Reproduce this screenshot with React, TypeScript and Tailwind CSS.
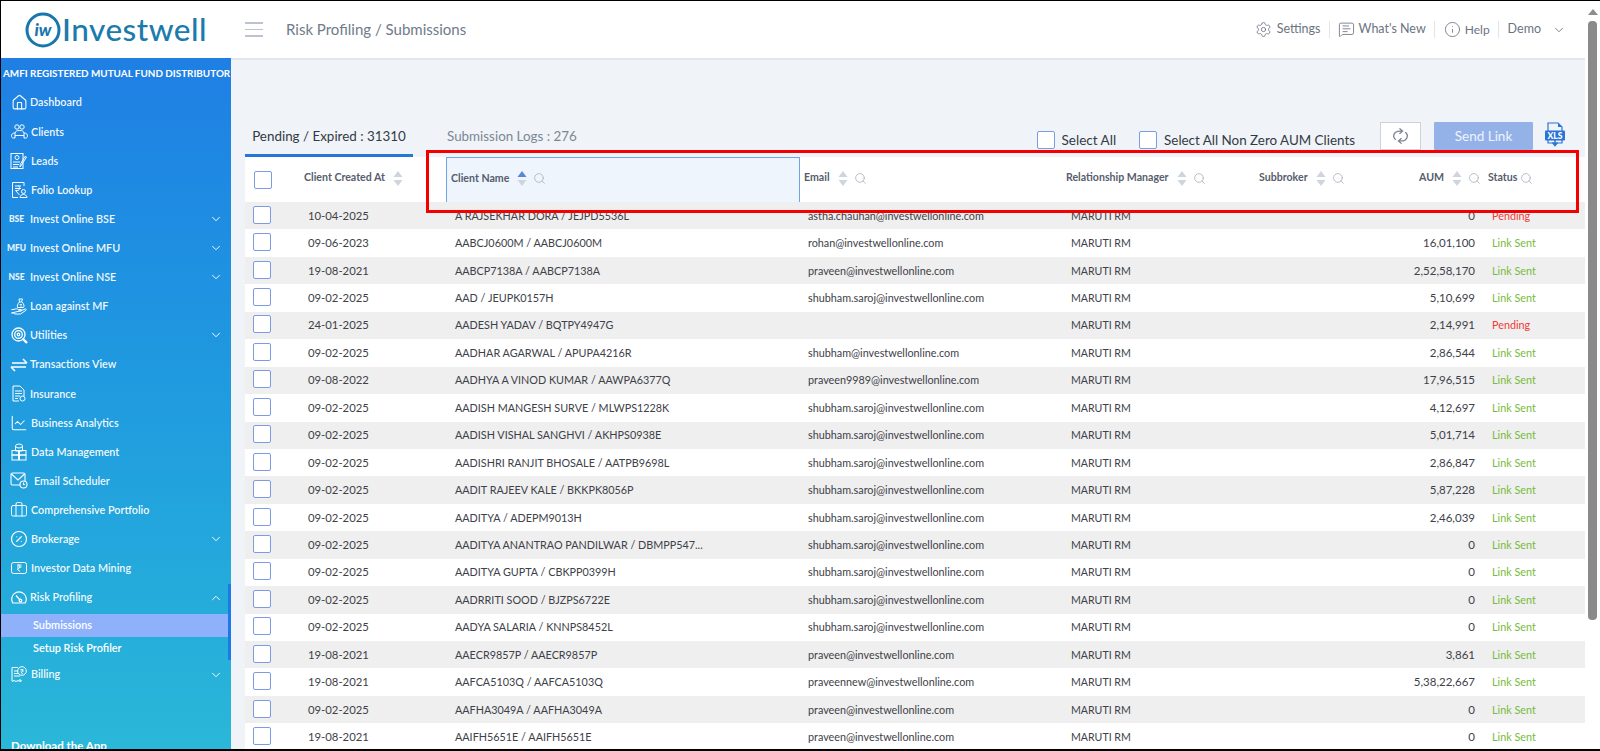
import React from "react";
import {
  Briefcase,
  ChevronDown,
  ChevronUp,
  ChartLine,
  CirclePercent,
  House,
  Info,
  MessageSquareText,
  Search,
  Settings,
} from "lucide-react";

type NavItem = {
  label: string;
  icon: React.ReactNode;
  labelClass: string;
  caret?: boolean;
};

function Badge({ text }: { text: string }) {
  return <span className="-ml-[5px] text-[8.500px] leading-none font-black text-white/90">{text}</span>;
}

function ClientsIcon() {
  return (
    <svg width="17" height="15" viewBox="0 0 17 15" fill="none" stroke="white" strokeWidth="1">
      <circle cx="6" cy="3" r="2.200" />
      <circle cx="11" cy="3" r="2.200" />
      <path d="M4 14V9.500C4 7 6 6.500 8.500 6.500S13 7 13 9.500V14" />
      <path d="M4 14H2.500C1 14 .5 13 .5 11.800c0-1.500 1-2.800 3.500-2.800M13 14h1.500c1.500 0 2-1 2-2.200 0-1.500-1-2.800-3.500-2.800" />
      <path d="M4 11.500h9" />
    </svg>
  );
}

function LeadsIcon() {
  return (
    <svg width="18" height="18" viewBox="0 0 18 18" fill="none" stroke="white" strokeWidth="1">
      <rect x="1" y="1.500" width="12" height="15" />
      <circle cx="7" cy="5.500" r="2" />
      <path d="M3 10h7M3 12.500h6M3 15h5" />
      <path d="M16.500 5l-5 8-1.500 2 .3-2.600 4.700-8z" />
    </svg>
  );
}

function FolioIcon() {
  return (
    <svg width="17" height="18" viewBox="0 0 17 18" fill="none" stroke="white" strokeWidth="1">
      <path d="M13 5V1.500H1.500v15H7" />
      <path d="M4 5h6M4 7.500h6M7 5c2.500 0 2.500 4.500-1 4.500H4.500L8.500 14" />
      <circle cx="12.500" cy="10.500" r="2" />
      <path d="M9 16.500c0-4 7-4 7 0z" />
    </svg>
  );
}

function LoanIcon() {
  return (
    <svg width="16" height="17" viewBox="0 0 16 17" fill="none" stroke="white" strokeWidth="1">
      <path d="M8 1h3.500L10.500 4h-2zM8.500 4C6.500 6 6 8 6.500 9.500h6C13.500 8 13 6 11 4" />
      <path d="M8.500 6.500h2.500M9 8h2" strokeWidth="0.800" />
      <path d="M.5 11.500H3c1.500-1 3-1 4.500 0H10c1 0 1 1.500 0 1.500H7M10.500 12.500l3.500-1.500c1.200-.4 1.700.8.800 1.400L9.500 16H4l-1.500-1H.5z" />
    </svg>
  );
}

function UtilitiesIcon() {
  return (
    <svg width="17" height="17" viewBox="0 0 17 17" fill="none" stroke="white" strokeWidth="1.300">
      <circle cx="7.500" cy="7.500" r="6.500" />
      <circle cx="7.500" cy="7.500" r="3.800" />
      <circle cx="7.500" cy="7.500" r="1.300" />
      <path d="M11.500 11.500l4.500 4.500" strokeWidth="2.400" />
    </svg>
  );
}

function TransactionsIcon() {
  return (
    <svg width="18" height="14" viewBox="0 0 18 14" fill="none" stroke="white" strokeWidth="1.600">
      <path d="M2 5h15M13 1l4 4M16 9H1M5 13L1 9" />
    </svg>
  );
}

function InsuranceIcon() {
  return (
    <svg width="14" height="17" viewBox="0 0 14 17" fill="none" stroke="white" strokeWidth="1">
      <path d="M7 16H1V1h7l4 4v6" />
      <path d="M3 6h7M3 8.500h7M3 11h5M3 13.500h3" />
      <circle cx="10.500" cy="13.500" r="2.500" />
    </svg>
  );
}

function DataIcon() {
  return (
    <svg width="16" height="18" viewBox="0 0 16 18" fill="none" stroke="white" strokeWidth="1">
      <ellipse cx="8" cy="3" rx="3.500" ry="2" />
      <path d="M4.500 3v5h7V3" />
      <rect x="1" y="7.500" width="6.500" height="4.500" />
      <rect x="8.500" y="7.500" width="6.500" height="4.500" />
      <rect x="1" y="12" width="6.500" height="5" />
      <rect x="8.500" y="12" width="6.500" height="5" />
    </svg>
  );
}

function EmailIcon() {
  return (
    <svg width="18" height="17" viewBox="0 0 18 17" fill="none" stroke="white" strokeWidth="1.100">
      <path d="M10 13H2.500A1.500 1.500 0 0 1 1 11.500v-9A1.500 1.500 0 0 1 2.500 1h11A1.500 1.500 0 0 1 15 2.500V9" />
      <path d="M1.500 2l6.500 6 6.500-6" />
      <circle cx="13.500" cy="12.500" r="3.500" />
      <path d="M13.500 10.500v2h1.500" />
    </svg>
  );
}

function MiningIcon() {
  return (
    <svg width="16" height="12" viewBox="0 0 16 12" fill="none" stroke="white" strokeWidth="1">
      <rect x="0.500" y="0.500" width="15" height="11" rx="2" />
      <path d="M6 3h4.500M6 5h4.500M7 3c2.500 0 2.500 4-.5 4H6l3 2.500" />
    </svg>
  );
}

function RiskIcon() {
  return (
    <svg width="16" height="13" viewBox="0 0 16 13" fill="none" stroke="white" strokeWidth="1.200">
      <path d="M1.800 12A7.300 7.300 0 1 1 14.200 12z" />
      <path d="M5 4.500L9 9" />
      <circle cx="9.500" cy="9.500" r="1.300" />
    </svg>
  );
}

function BillingIcon() {
  return (
    <svg width="16" height="17" viewBox="0 0 16 17" fill="none" stroke="white" strokeWidth="1">
      <path d="M1 15V1.500h6M9 13v2" />
      <path d="M1 15.500l2-1 2 1 2-1 2 1 2-1" />
      <path d="M3 5h4M3 7.500h5M3 10h6" />
      <circle cx="11" cy="5" r="4.300" />
      <path d="M9.500 3.500h3M9.500 5h3M10.500 3.500c1.800 0 1.800 3-.5 3l2 1.500" strokeWidth="0.800" />
    </svg>
  );
}

const navTop: NavItem[] = [
  { label: "Dashboard", icon: <House size={17} strokeWidth={1.5} color="white" />, labelClass: "ml-[2px]" },
  { label: "Clients", icon: <ClientsIcon />, labelClass: "ml-[3px]" },
  { label: "Leads", icon: <LeadsIcon />, labelClass: "ml-[3px]" },
  { label: "Folio Lookup", icon: <FolioIcon />, labelClass: "ml-[3px]" },
  { label: "Invest Online BSE", icon: <Badge text="BSE" />, labelClass: "ml-[2px]", caret: true },
  { label: "Invest Online MFU", icon: <Badge text="MFU" />, labelClass: "ml-[2px]", caret: true },
  { label: "Invest Online NSE", icon: <Badge text="NSE" />, labelClass: "ml-[2px]", caret: true },
  { label: "Loan against MF", icon: <LoanIcon />, labelClass: "ml-[2px]" },
  { label: "Utilities", icon: <UtilitiesIcon />, labelClass: "ml-[2px]", caret: true },
  { label: "Transactions View", icon: <TransactionsIcon />, labelClass: "ml-[2px]" },
  { label: "Insurance", icon: <InsuranceIcon />, labelClass: "ml-[2px]" },
  { label: "Business Analytics", icon: <ChartLine size={18} strokeWidth={1.4} color="white" />, labelClass: "ml-[3px]" },
  { label: "Data Management", icon: <DataIcon />, labelClass: "ml-[3px]" },
  { label: "Email Scheduler", icon: <EmailIcon />, labelClass: "ml-[6px]" },
  { label: "Comprehensive Portfolio", icon: <Briefcase size={18} strokeWidth={1.3} color="white" />, labelClass: "ml-[3px]" },
  { label: "Brokerage", icon: <CirclePercent size={18} strokeWidth={1.6} color="white" />, labelClass: "ml-[3px]", caret: true },
  { label: "Investor Data Mining", icon: <MiningIcon />, labelClass: "ml-[3px]" },
];

const rows = [
  ["10-04-2025", "A RAJSEKHAR DORA / JEJPD5536L", "astha.chauhan@investwellonline.com", "0", "Pending"],
  ["09-06-2023", "AABCJ0600M / AABCJ0600M", "rohan@investwellonline.com", "16,01,100", "Link Sent"],
  ["19-08-2021", "AABCP7138A / AABCP7138A", "praveen@investwellonline.com", "2,52,58,170", "Link Sent"],
  ["09-02-2025", "AAD / JEUPK0157H", "shubham.saroj@investwellonline.com", "5,10,699", "Link Sent"],
  ["24-01-2025", "AADESH YADAV / BQTPY4947G", "", "2,14,991", "Pending"],
  ["09-02-2025", "AADHAR AGARWAL / APUPA4216R", "shubham@investwellonline.com", "2,86,544", "Link Sent"],
  ["09-08-2022", "AADHYA A VINOD KUMAR / AAWPA6377Q", "praveen9989@investwellonline.com", "17,96,515", "Link Sent"],
  ["09-02-2025", "AADISH MANGESH SURVE / MLWPS1228K", "shubham.saroj@investwellonline.com", "4,12,697", "Link Sent"],
  ["09-02-2025", "AADISH VISHAL SANGHVI / AKHPS0938E", "shubham.saroj@investwellonline.com", "5,01,714", "Link Sent"],
  ["09-02-2025", "AADISHRI RANJIT BHOSALE / AATPB9698L", "shubham.saroj@investwellonline.com", "2,86,847", "Link Sent"],
  ["09-02-2025", "AADIT RAJEEV KALE / BKKPK8056P", "shubham.saroj@investwellonline.com", "5,87,228", "Link Sent"],
  ["09-02-2025", "AADITYA / ADEPM9013H", "shubham.saroj@investwellonline.com", "2,46,039", "Link Sent"],
  ["09-02-2025", "AADITYA ANANTRAO PANDILWAR / DBMPP547...", "shubham.saroj@investwellonline.com", "0", "Link Sent"],
  ["09-02-2025", "AADITYA GUPTA / CBKPP0399H", "shubham.saroj@investwellonline.com", "0", "Link Sent"],
  ["09-02-2025", "AADRRITI SOOD / BJZPS6722E", "shubham.saroj@investwellonline.com", "0", "Link Sent"],
  ["09-02-2025", "AADYA SALARIA / KNNPS8452L", "shubham.saroj@investwellonline.com", "0", "Link Sent"],
  ["19-08-2021", "AAECR9857P / AAECR9857P", "praveen@investwellonline.com", "3,861", "Link Sent"],
  ["19-08-2021", "AAFCA5103Q / AAFCA5103Q", "praveennew@investwellonline.com", "5,38,22,667", "Link Sent"],
  ["09-02-2025", "AAFHA3049A / AAFHA3049A", "praveen@investwellonline.com", "0", "Link Sent"],
  ["19-08-2021", "AAIFH5651E / AAIFH5651E", "praveen@investwellonline.com", "0", "Link Sent"],
];

const gridCols = "grid grid-cols-[50px_151px_354px_260px_190px_150px_85px_90px]";

function Checkbox() {
  return <span className="block w-[18px] h-[18px] bg-white border border-[#7b9be6] rounded-[2px]" />;
}

function SortIcon({ active }: { active?: boolean }) {
  return (
    <svg width="10" height="15" viewBox="0 0 10 15" className="shrink-0">
      <path d="M5 0l4.500 6h-9z" fill={active ? "#5b86d8" : "#ced5de"} />
      <path d="M5 15l4.500-6h-9z" fill="#ced5de" />
    </svg>
  );
}

type HeadCellProps = {
  label: string;
  className: string;
  active?: boolean;
  sort?: boolean;
  search?: boolean;
};

function HeadCell({ label, className, active, sort = true, search = true }: HeadCellProps) {
  return (
    <div className={`flex items-center h-full pb-[3px] ${className}`}>
      <span className="text-[10.600px] font-bold text-[#565d6d] whitespace-nowrap">{label}</span>
      {sort && <span className="ml-[8px]"><SortIcon active={active} /></span>}
      {search && <Search size={13} strokeWidth={1.4} color="#a3adba" className={sort ? "ml-[6px]" : "ml-[3px]"} />}
    </div>
  );
}

function SideRow({ item }: { item: NavItem }) {
  return (
    <div className="flex items-center h-[29.120px] pr-[8px]">
      <span className="w-[27px] flex justify-center pl-[9px] shrink-0">{item.icon}</span>
      <span className={`text-[10.800px] font-semibold text-white/95 whitespace-nowrap ${item.labelClass}`}>{item.label}</span>
      {item.caret && <ChevronDown size={14} strokeWidth={1.6} color="white" className="ml-auto" />}
    </div>
  );
}

function Sidebar() {
  return (
    <aside className="relative w-[230px] shrink-0 overflow-hidden bg-gradient-to-b from-[#1f7fe4] to-[#2ab7d8] text-white">
      <div className="h-[30px] flex items-center pl-[2px] text-[9.900px] font-bold whitespace-nowrap">
        AMFI REGISTERED MUTUAL FUND DISTRIBUTOR
      </div>
      {navTop.map((item) => (
        <SideRow key={item.label} item={item} />
      ))}
      <SideRow item={{ label: "Risk Profiling", icon: <RiskIcon />, labelClass: "ml-[2px]" }} />
      <ChevronUp size={14} strokeWidth={1.6} color="white" className="absolute right-[8px] top-[533px]" />
      <div className="mt-[2px] h-[23px] flex items-center pl-[32px] mr-[3px] bg-[#8fb0fb] text-[10.900px] font-semibold">Submissions</div>
      <div className="h-[23px] flex items-center pl-[32px] text-[10.900px] font-semibold">Setup Risk Profiler</div>
      <SideRow item={{ label: "Billing", icon: <BillingIcon />, labelClass: "ml-[3px]", caret: true }} />
      <div className="mt-[48px] pl-[10px] text-[11.500px] font-bold whitespace-nowrap">Download the App</div>
      <span className="absolute right-0 top-[526px] w-[3px] h-[76px] bg-[#1a7be6]" />
    </aside>
  );
}

function TopBar() {
  return (
    <header className="flex items-center h-[57px] bg-white shrink-0">
      <div className="w-[230px] flex items-center pl-[24px] shrink-0">
        <svg width="36" height="36" viewBox="0 0 36 36">
          <circle cx="18" cy="18" r="16" fill="none" stroke="#1776ad" strokeWidth="3" />
          <text x="18" y="24" textAnchor="middle" fontFamily="Lato" fontSize="17" fontWeight="900" fontStyle="italic" fill="#1776ad">
            iw
          </text>
        </svg>
        <span className="ml-[1px] text-[31.500px] leading-none font-medium text-[#1b7bad] tracking-[0.5px]">Investwell</span>
      </div>
      <div className="ml-[14px] w-[18px] flex flex-col gap-[5px]">
        <span className="h-[1.500px] bg-[#bcc3ce]" />
        <span className="h-[1.500px] bg-[#bcc3ce]" />
        <span className="h-[1.500px] bg-[#bcc3ce]" />
      </div>
      <span className="ml-[23px] text-[15px] text-[#707b8a]">Risk Profiling / Submissions</span>
      <div className="ml-auto flex items-center pr-[19px] text-[12.500px] text-[#6b7482]">
        <Settings size={17} strokeWidth={1.2} />
        <span className="ml-[5px]">Settings</span>
        <span className="mx-[8px] w-px h-[17px] bg-[#e2e5ea]" />
        <MessageSquareText size={17} strokeWidth={1.2} />
        <span className="ml-[4px]">What's New</span>
        <span className="mx-[8.500px] w-px h-[17px] bg-[#e2e5ea]" />
        <Info size={17} strokeWidth={1.2} />
        <span className="ml-[4px] text-[12px]">Help</span>
        <span className="mx-[8.500px] w-px h-[17px] bg-[#e2e5ea]" />
        <span>Demo</span>
        <ChevronDown size={14} strokeWidth={1.5} className="ml-[11px]" />
      </div>
    </header>
  );
}

function Toolbar() {
  return (
    <div className="flex items-start h-[35px] pr-[20px]">
      <div className="w-[168px] h-[35px] border-b-[3px] border-[#2478d8] pt-[4px] text-center text-[13.400px] text-[#333a44] whitespace-nowrap">
        Pending / Expired : 31310
      </div>
      <div className="ml-[34px] pt-[4px] text-[13.400px] text-[#7c8794] whitespace-nowrap">Submission Logs : 276</div>
      <div className="ml-auto mt-[8px] flex items-center">
        <Checkbox />
        <span className="ml-[7px] text-[13.500px] text-[#343a44]">Select All</span>
      </div>
      <div className="ml-[23px] mt-[8px] flex items-center">
        <Checkbox />
        <span className="ml-[7px] text-[13.400px] text-[#343a44]">Select All Non Zero AUM Clients</span>
      </div>
      <button className="ml-[25px] w-[41px] h-[28px] flex items-center justify-center bg-white border border-[#cdd2dc]">
        <svg width="21" height="18" viewBox="0 0 20 20" preserveAspectRatio="none" fill="none" stroke="#7d8794" strokeWidth="1.300">
          <path d="M11 4.500H9a5.500 5.500 0 0 0-3.500 9.700M9 1.500l3 3-3 3" />
          <path d="M9 15.500h2a5.500 5.500 0 0 0 3.500-9.700M11 18.500l-3-3 3-3" />
        </svg>
      </button>
      <button className="ml-[13px] w-[99px] h-[28px] bg-[#94b2e8] text-[13.500px] text-white/85 rounded-[1px]">Send Link</button>
      <svg width="20" height="26" viewBox="0 0 20 26" className="ml-[12px]">
        <path d="M3 10V1h10l4 4v5M3 18v3h14v-3" fill="none" stroke="#2a73d8" strokeWidth="1.200" />
        <path d="M13 1v4h4z" fill="#2a73d8" />
        <rect x="0" y="8.500" width="20" height="10" rx="1" fill="#2a73d8" />
        <text x="10" y="16.500" textAnchor="middle" fontFamily="Lato" fontSize="8.500" fontWeight="900" fill="white">XLS</text>
        <path d="M10 18v4M7.500 20.500l2.500 3 2.500-3" fill="none" stroke="#2a73d8" strokeWidth="1.500" />
      </svg>
    </div>
  );
}

function Table() {
  return (
    <div>
      <div className={`${gridCols} h-[45px] bg-white`}>
        <div className="flex items-center pl-[9px]"><Checkbox /></div>
        <HeadCell label="Client Created At" search={false} className="pl-[9px]" />
        <HeadCell label="Client Name" active className="pl-[4px] bg-[#eef5fd] border-x border-t border-[#6fa5e8]" />
        <HeadCell label="Email" className="pl-[4px]" />
        <HeadCell label="Relationship Manager" className="pl-[6px]" />
        <HeadCell label="Subbroker" className="pl-[9px]" />
        <HeadCell label="AUM" className="pl-[19px]" />
        <HeadCell label="Status" sort={false} className="pl-[3px]" />
      </div>
      {rows.map((row, i) => (
        <div key={row[1]} className={`${gridCols} h-[27.450px] items-center text-[10.800px] leading-[16px] text-[#3d4148] ${i % 2 === 0 ? "bg-[#efefef]" : "bg-white"}`}>
          <div className="pl-[8px] -translate-y-[1px]"><Checkbox /></div>
          <div className="pl-[13px] text-[11.300px] leading-[16px]">{row[0]}</div>
          <div className="pl-[9px] whitespace-nowrap">{row[1]}</div>
          <div className="pl-[8px] whitespace-nowrap">{row[2]}</div>
          <div className="pl-[11px] text-[10.600px] leading-[16px]">MARUTI RM</div>
          <div />
          <div className="text-right pr-[10px] text-[11.500px] leading-[16px]">{row[3]}</div>
          <div className={`pl-[7px] ${row[4] === "Pending" ? "text-[#ee3b3b]" : "text-[#78ba3c]"}`}>{row[4]}</div>
        </div>
      ))}
    </div>
  );
}

function PageScrollbar() {
  return (
    <div className="w-[15px] shrink-0 bg-white flex flex-col items-center">
      <svg width="10" height="6" viewBox="0 0 10 6" className="mt-[8px]">
        <path d="M5 0l5 6H0z" fill="#8d8d8d" />
      </svg>
      <span className="mt-[6px] w-[9px] h-[599px] rounded-[4px] bg-[#8a8a8a]" />
    </div>
  );
}

export default function App() {
  return (
    <div className="relative h-[751px] overflow-hidden flex border-t border-l border-b-2 border-black font-['Lato',sans-serif] bg-white">
      <div className="flex-1 min-w-0 flex flex-col">
        <TopBar />
        <div className="flex flex-1 min-h-0">
          <Sidebar />
          <main className="flex-1 min-w-0 overflow-hidden bg-[#f0f3f8] border-t-2 border-[#e3e6f0] pl-[14px] pt-[62px]">
            <Toolbar />
            <Table />
          </main>
        </div>
      </div>
      <PageScrollbar />
      {/* red annotation drawn over the table head */}
      <div className="absolute left-[425px] top-[149px] w-[1153px] h-[63px] border-[3px] border-[#f40000]" />
    </div>
  );
}
